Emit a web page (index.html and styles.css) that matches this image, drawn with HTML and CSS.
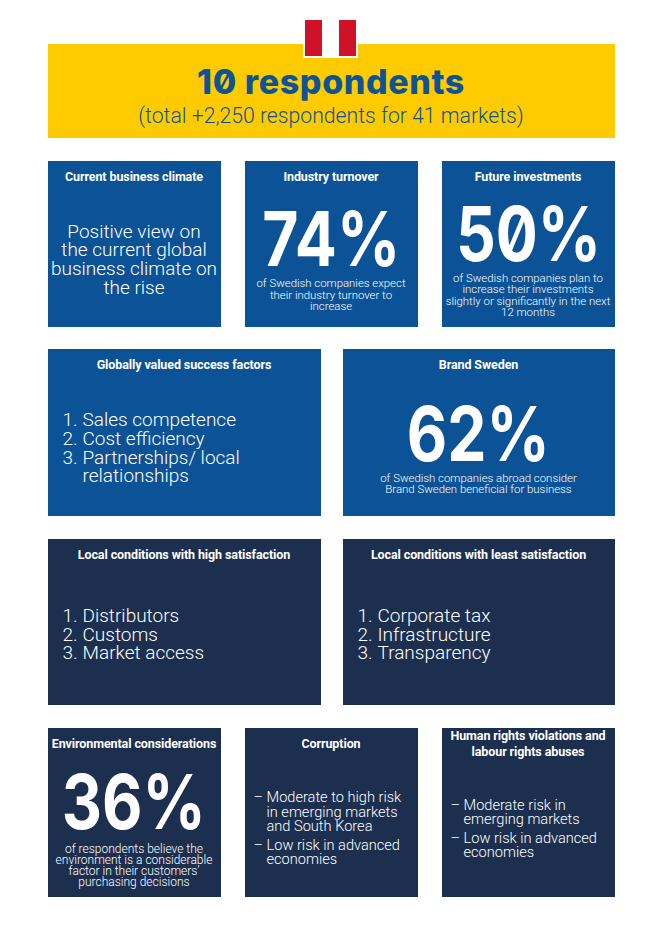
FILE: index.html
```
<!DOCTYPE html>
<html lang="en">
<head>
<meta charset="utf-8">
<title>10 respondents</title>
<link rel="stylesheet" href="styles.css">
</head>
<body>
<div class="page">
  <header class="hero">
    <div class="flag"><span class="red"></span><span class="white"></span><span class="red"></span></div>
    <h1 class="hero-title">10 respondents</h1>
    <p class="hero-sub">(total +2,250 respondents for 41 markets)</p>
  </header>

  <section class="row row-3 r1">
    <div class="card blue">
      <h2 class="card-title">Current business climate</h2>
      <div class="card-body">
        <p class="statement">Positive view on<br>the current global<br>business climate on<br>the rise</p>
      </div>
    </div>
    <div class="card blue">
      <h2 class="card-title">Industry turnover</h2>
      <div class="card-body">
        <div class="big"><span class="num">74%</span></div>
        <p class="note">of Swedish companies expect<br>their industry turnover to<br>increase</p>
      </div>
    </div>
    <div class="card blue">
      <h2 class="card-title">Future investments</h2>
      <div class="card-body">
        <div class="big"><span class="num">50%</span></div>
        <p class="note">of Swedish companies plan to<br>increase their investments<br>slightly or significantly in the next<br>12 months</p>
      </div>
    </div>
  </section>

  <section class="row row-2 r2">
    <div class="card blue">
      <h2 class="card-title">Globally valued success factors</h2>
      <div class="card-body left">
        <ol class="rank">
          <li><span class="n">1.</span><span>Sales competence</span></li>
          <li><span class="n">2.</span><span>Cost efficiency</span></li>
          <li><span class="n">3.</span><span>Partnerships/ local relationships</span></li>
        </ol>
      </div>
    </div>
    <div class="card blue">
      <h2 class="card-title">Brand Sweden</h2>
      <div class="card-body">
        <div class="big"><span class="num">62%</span></div>
        <p class="note">of Swedish companies abroad consider<br>Brand Sweden beneficial for business</p>
      </div>
    </div>
  </section>

  <section class="row row-2 r3">
    <div class="card navy">
      <h2 class="card-title">Local conditions with high satisfaction</h2>
      <div class="card-body left">
        <ol class="rank">
          <li><span class="n">1.</span><span>Distributors</span></li>
          <li><span class="n">2.</span><span>Customs</span></li>
          <li><span class="n">3.</span><span>Market access</span></li>
        </ol>
      </div>
    </div>
    <div class="card navy">
      <h2 class="card-title">Local conditions with least satisfaction</h2>
      <div class="card-body left">
        <ol class="rank">
          <li><span class="n">1.</span><span>Corporate tax</span></li>
          <li><span class="n">2.</span><span>Infrastructure</span></li>
          <li><span class="n">3.</span><span>Transparency</span></li>
        </ol>
      </div>
    </div>
  </section>

  <section class="row row-3 r4">
    <div class="card navy">
      <h2 class="card-title">Environmental considerations</h2>
      <div class="card-body">
        <div class="big env"><span class="num">36%</span></div>
        <p class="note env-note">of respondents believe the<br>environment is a considerable<br>factor in their customers’<br>purchasing decisions</p>
      </div>
    </div>
    <div class="card navy">
      <h2 class="card-title">Corruption</h2>
      <div class="card-body dashes-body">
        <ul class="dashes">
          <li><span class="d">–</span><span>Moderate to high risk<br>in emerging markets<br>and South Korea</span></li>
          <li><span class="d">–</span><span>Low risk in advanced<br>economies</span></li>
        </ul>
      </div>
    </div>
    <div class="card navy">
      <h2 class="card-title">Human rights violations and<br>labour rights abuses</h2>
      <div class="card-body dashes-body">
        <ul class="dashes">
          <li><span class="d">–</span><span>Moderate risk in<br>emerging markets</span></li>
          <li><span class="d">–</span><span>Low risk in advanced<br>economies</span></li>
        </ul>
      </div>
    </div>
  </section>
</div>
</body>
</html>
```

FILE: styles.css
```
* { box-sizing: border-box; }

body {
  margin: 0;
  background: #ffffff;
  font-family: Roboto, "Liberation Sans", sans-serif;
  color: #ffffff;
}

.page {
  width: 567px;
  margin: 0 auto;
  padding-top: 44px;
}

/* Header */
.hero {
  position: relative;
  height: 94px;
  background: #fecb00;
  padding-top: 20px;
  text-align: center;
  color: #0e5395;
}

.flag {
  position: absolute;
  top: -26px;
  left: 50%;
  margin-left: -28px;
  display: flex;
  width: 55px;
  height: 40px;
  border: 2px solid #ffffff;
  background: #ffffff;
}
.flag span { flex: 1; }
.flag .red { background: #cf1228; }
.flag .white { background: #ffffff; }

.hero-title {
  margin: 0;
  font-family: Inter, Roboto, sans-serif;
  font-feature-settings: "zero" 1;
  font-weight: 800;
  font-size: 34px;
  line-height: 36px;
  letter-spacing: 0.6px;
}

.hero-sub {
  margin: 4px 0 0;
  font-weight: 300;
  font-size: 21.2px;
  line-height: 24px;
}

/* Rows */
.row {
  display: grid;
  margin-top: 23px;
}
.row-3 { grid-template-columns: repeat(3, 173px); justify-content: space-between; }
.row-2 { grid-template-columns: 273px 272px; column-gap: 22px; }
.r1 { height: 166px; }
.r2 { height: 167px; margin-top: 22px; }
.r3 { height: 166px; }
.r4 { height: 169px; }

.card {
  display: flex;
  flex-direction: column;
  min-width: 0;
}
.blue { background: #0c5296; }
.navy { background: #1c2f4f; }

.card-title {
  height: 32px;
  margin: 0;
  display: flex;
  align-items: center;
  justify-content: center;
  text-align: center;
  font-weight: 700;
  font-size: 12.5px;
  line-height: 16px;
  letter-spacing: -0.1px;
}

.card-body {
  flex: 1;
  display: flex;
  flex-direction: column;
  justify-content: center;
  align-items: center;
  text-align: center;
}
.card-body.left {
  align-items: flex-start;
  text-align: left;
  padding-left: 15px;
  padding-right: 10px;
}
.r3 .card-body.left { padding-bottom: 6px; }

.statement {
  margin: 0;
  font-weight: 300;
  font-size: 19px;
  line-height: 18.7px;
}

.big {
  font-family: Inter, Roboto, sans-serif;
  font-feature-settings: "zero" 1;
  font-weight: 700;
  font-size: 76px;
  line-height: 62px;
  padding-bottom: 9px;
}
.big.env { padding-bottom: 12px; }
.num {
  display: inline-block;
  transform: scaleX(0.82);
}

.note {
  margin: 0;
  font-weight: 300;
  font-size: 11.4px;
  line-height: 11.5px;
  white-space: nowrap;
}
.env-note {
  font-size: 12px;
  line-height: 11px;
}

.rank {
  list-style: none;
  margin: 0;
  padding: 0;
  font-weight: 300;
  font-size: 19px;
  line-height: 18.7px;
}
.rank li {
  display: grid;
  grid-template-columns: 20px 1fr;
}
.r2 .rank { width: 210px; }

.card-body.dashes-body {
  align-items: flex-start;
  text-align: left;
  padding-left: 9px;
  padding-right: 2px;
}
.dashes {
  list-style: none;
  margin: 0;
  padding: 0;
  font-weight: 300;
  font-size: 14.6px;
  line-height: 14.5px;
  white-space: nowrap;
}
.dashes li {
  display: grid;
  grid-template-columns: 13px 1fr;
}
.dashes li + li { margin-top: 4px; }
```
